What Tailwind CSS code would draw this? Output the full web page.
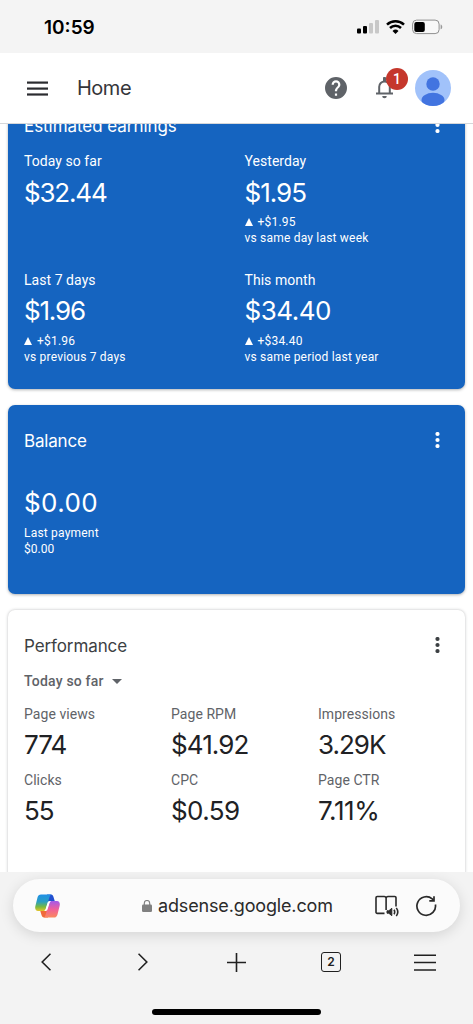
<!DOCTYPE html>
<html lang="en">
<head>
<meta charset="utf-8">
<title>Home</title>
<script src="https://cdn.jsdelivr.net/npm/@tailwindcss/browser@4"></script>
</head>
<body class="w-[473px] h-[1024px] overflow-hidden flex flex-col bg-white font-['Roboto',sans-serif]">

<!-- Status bar -->
<div class="h-[53px] shrink-0 bg-[#f4f4f4] flex items-center justify-between pl-[44px] pr-[30px]">
  <span class="font-['Inter',sans-serif] font-semibold text-[19px] leading-6 tracking-[0px] text-black mt-[2px]">10:59</span>
  <div class="flex items-center mt-px">
    <svg class="w-[22px] h-[14px]" viewBox="0 0 22 14"><rect y="8.5" width="4" height="5" rx="1"/><rect x="6" y="6" width="4" height="7.500" rx="1"/><rect x="12" y="3" width="4" height="10.500" rx="1" fill="#c8c8c8"/><rect x="18" y="0" width="4" height="13.500" rx="1" fill="#c8c8c8"/></svg>
    <svg class="w-[19px] h-[14px] ml-[7px]" viewBox="0 0 19 14" fill="none" stroke="#000" stroke-width="2.500"><path d="M1 4.700a12.300 12.300 0 0 1 17 0"/><path d="M4 8a8 8 0 0 1 11 0"/><path d="M9.500 14L6.500 11a4.300 4.300 0 0 1 6 0z" fill="#000" stroke="none"/></svg>
    <svg class="w-[31px] h-[16px] ml-[7px]" viewBox="0 0 31 16"><rect x=".6" y="1.100" width="26.500" height="13.500" rx="4" fill="#f8f8f8" stroke="#8f8f8f"/><rect x="2.300" y="2.900" width="10.500" height="10" rx="2" fill="#000"/><path d="M28.600 5.500c2.200.6 2.200 4.200 0 4.800z" fill="#999"/></svg>
  </div>
</div>

<!-- App header -->
<header class="h-[71px] shrink-0 bg-white border-b border-[#d5d7da] flex items-center">
  <svg class="w-[21px] h-[15px] ml-[27px]" viewBox="0 0 21 15" fill="#2b2c30"><rect y=".5" width="21" height="2.200"/><rect y="6.500" width="21" height="2.200"/><rect y="12.400" width="21" height="2.200"/></svg>
  <h1 class="ml-[29px] font-['Inter',sans-serif] text-[20px] leading-6 tracking-[-0.5px] text-[#35363a]">Home</h1>
  <div class="ml-auto flex items-center mr-[22px]">
    <svg class="w-[22px] h-[22px]" viewBox="2 2 20 20" fill="#5f6368"><path d="M12 2a10 10 0 1 0 0 20 10 10 0 0 0 0-20zm1 17h-2v-2h2zm2.070-7.750-.9.920C13.450 12.900 13 13.500 13 15h-2v-.5c0-1.100.450-2.100 1.170-2.830l1.240-1.260c.370-.360.590-.860.590-1.410a2 2 0 1 0-4 0H8a4 4 0 1 1 8 0c0 .880-.360 1.680-.930 2.250z"/></svg>
    <div class="relative w-[19px] h-[22px] ml-[28px]">
      <svg class="w-[19px] h-[22px]" viewBox="0 0 19 22"><path d="M4.200 16.500V9.800a5.300 5.300 0 0 1 10.600 0v6.700" fill="none" stroke="#5f6368" stroke-width="2"/><path d="M1 15.600h17v2H1zM8 1.200a1.500 1.500 0 0 1 3 0v3H8zM7.200 19h4.600a2.300 2.300 0 0 1-4.600 0z" fill="#5f6368"/></svg>
      <span class="absolute left-[11px] -top-[9px] size-[22px] rounded-full bg-[#c5372c] text-white font-medium text-[14px] leading-[22px] text-center">1</span>
    </div>
    <svg class="size-[36px] ml-[21px]" viewBox="0 0 36 36"><defs><clipPath id="av"><circle cx="18" cy="18" r="18"/></clipPath></defs><g clip-path="url(#av)"><rect width="36" height="36" fill="#a1c2fa"/><circle cx="18" cy="14" r="6.700" fill="#4274e0"/><ellipse cx="18" cy="30" rx="11.500" ry="7.200" fill="#4274e0"/></g></svg>
  </div>
</header>

<!-- Cards -->
<main class="flex-1 min-h-0 overflow-hidden px-2 flex flex-col gap-4">
  <section class="-mt-[34px] h-[299px] shrink-0 rounded-[7px] bg-[#1564c0] shadow-[0_1px_3px_rgba(60,64,67,0.4)] px-4 pt-[19px] text-white">
    <div class="flex items-center justify-between h-8">
      <h2 class="font-['Inter',sans-serif] text-[17px] tracking-[-0.05px] pt-[3px]">Estimated earnings</h2>
      <svg class="w-[5px] h-[16px] mr-[9px]" viewBox="0 0 5 16" fill="currentColor"><circle cx="2.500" cy="2" r="2.100"/><circle cx="2.500" cy="8" r="2.100"/><circle cx="2.500" cy="14" r="2.100"/></svg>
    </div>
    <div class="grid grid-cols-[220.500px_1fr] gap-y-[23.500px] mt-[10px]">
      <div class="h-[95px]">
        <div class="text-[14px] leading-5 tracking-[0.05px]">Today so far</div>
        <div class="font-['Inter',sans-serif] text-[26px] leading-[42px] pt-px -mb-px tracking-[-1.200px]">$32.44</div>
      </div>
      <div class="h-[95px]">
        <div class="text-[14px] leading-5 tracking-[0.05px]">Yesterday</div>
        <div class="font-['Inter',sans-serif] text-[26px] leading-[42px] pt-px -mb-px tracking-[-1px]">$1.95</div>
        <div class="flex items-center text-[12px] leading-4 tracking-[0.2px] mt-px"><svg class="size-[8px] mr-[5px]" viewBox="0 0 8 8" fill="currentColor"><path d="M4 0l4 8H0z"/></svg>+$1.95</div>
        <div class="text-[12px] leading-4 tracking-[0.2px]">vs same day last week</div>
      </div>
      <div class="h-[95px]">
        <div class="text-[14px] leading-5 tracking-[0.05px]">Last 7 days</div>
        <div class="font-['Inter',sans-serif] text-[26px] leading-[42px] tracking-[-1.200px]">$1.96</div>
        <div class="flex items-center text-[12px] leading-4 tracking-[0.2px] mt-px"><svg class="size-[8px] mr-[5px]" viewBox="0 0 8 8" fill="currentColor"><path d="M4 0l4 8H0z"/></svg>+$1.96</div>
        <div class="text-[12px] leading-4 tracking-[0.2px]">vs previous 7 days</div>
      </div>
      <div class="h-[95px]">
        <div class="text-[14px] leading-5 tracking-[0.05px]">This month</div>
        <div class="font-['Inter',sans-serif] text-[26px] leading-[42px] tracking-[-0.5px]">$34.40</div>
        <div class="flex items-center text-[12px] leading-4 tracking-[0.2px] mt-px"><svg class="size-[8px] mr-[5px]" viewBox="0 0 8 8" fill="currentColor"><path d="M4 0l4 8H0z"/></svg>+$34.40</div>
        <div class="text-[12px] leading-4 tracking-[0.2px]">vs same period last year</div>
      </div>
    </div>
  </section>

  <section class="h-[189px] shrink-0 rounded-[7px] bg-[#1564c0] shadow-[0_1px_3px_rgba(60,64,67,0.4)] px-4 pt-[19px] text-white">
    <div class="flex items-center justify-between h-8">
      <h2 class="font-['Inter',sans-serif] text-[17px] tracking-[-0.2px] pt-[3px]">Balance</h2>
      <svg class="w-[5px] h-[16px] mr-[9px]" viewBox="0 0 5 16" fill="currentColor"><circle cx="2.500" cy="2" r="2.100"/><circle cx="2.500" cy="8" r="2.100"/><circle cx="2.500" cy="14" r="2.100"/></svg>
    </div>
    <div class="mt-[26px] font-['Inter',sans-serif] text-[26px] leading-[42px] tracking-[0.4px]">$0.00</div>
    <div class="text-[12px] leading-4 tracking-[0.2px] mt-px">Last payment</div>
    <div class="text-[12px] leading-4">$0.00</div>
  </section>

  <section class="h-[299px] shrink-0 rounded-[7px] bg-white shadow-[0_0_3px_rgba(60,64,67,0.35)] px-4 pt-[19px]">
    <div class="flex items-center justify-between h-8 text-[#3c4043]">
      <h2 class="font-['Inter',sans-serif] text-[17px] tracking-[-0.1px] pt-[3px]">Performance</h2>
      <svg class="w-[5px] h-[16px] mr-[9px]" viewBox="0 0 5 16" fill="currentColor"><circle cx="2.500" cy="2" r="2.100"/><circle cx="2.500" cy="8" r="2.100"/><circle cx="2.500" cy="14" r="2.100"/></svg>
    </div>
    <div class="flex items-center gap-[8px] mt-[10px] text-[14px] leading-5 font-medium tracking-[0.2px] text-[#5f6368]">Today so far<svg class="w-[10px] h-[5px]" viewBox="0 0 10 5" fill="currentColor"><path d="M0 0h10L5 5z"/></svg></div>
    <div class="grid grid-cols-[147px_147px_1fr] mt-[13px] gap-y-[4px] text-[#5f6368] text-[14px] leading-5 tracking-[0.05px]">
      <div>Page views<div class="font-['Inter',sans-serif] text-[26px] leading-[42px] tracking-[-1px] text-[#202124]">774</div></div>
      <div>Page RPM<div class="font-['Inter',sans-serif] text-[26px] leading-[42px] tracking-[-0.9px] text-[#202124]">$41.92</div></div>
      <div>Impressions<div class="font-['Inter',sans-serif] text-[26px] leading-[42px] tracking-[-1px] text-[#202124]">3.29K</div></div>
      <div>Clicks<div class="font-['Inter',sans-serif] text-[26px] leading-[42px] tracking-[-1px] text-[#202124]">55</div></div>
      <div>CPC<div class="font-['Inter',sans-serif] text-[26px] leading-[42px] tracking-[-0.6px] text-[#202124]">$0.59</div></div>
      <div>Page CTR<div class="font-['Inter',sans-serif] text-[26px] leading-[42px] tracking-[-0.4px] text-[#202124]">7.11%</div></div>
    </div>
  </section>
</main>

<!-- Browser toolbar -->
<footer class="h-[152px] shrink-0 bg-[#f3f3f3] flex flex-col pt-[7px]">
  <div class="mx-[13px] h-[53px] rounded-[27px] bg-[#fbfbfb] shadow-[0_3px_14px_rgba(0,0,0,0.13)] flex items-center text-[#2a2a2a]">
    <svg class="w-[25px] h-[24px] ml-[22px]" viewBox="0 0 25 24">
      <defs>
        <linearGradient id="c1" x1="0" y1="0" x2="0" y2="1"><stop offset="0" stop-color="#1f8fe8"/><stop offset=".45" stop-color="#2a9fc0"/><stop offset=".75" stop-color="#79b93f"/><stop offset="1" stop-color="#e5c52a"/></linearGradient>
        <linearGradient id="c2" x1="0" y1="0" x2="0" y2="1"><stop offset="0" stop-color="#a35bea"/><stop offset=".5" stop-color="#f0609a"/><stop offset="1" stop-color="#fb8a5c"/></linearGradient>
      </defs>
      <path d="M12 .4h4c1.500 0 2 1 2.500 2.500l1.300 4.300h-4.200c-2 0-3 1-3.600 3z" fill="#2250d0"/>
      <path d="M13 23.600H9c-1.500 0-2-1-2.500-2.500l-1.300-4.300h4.200c2 0 3-1 3.600-3z" fill="#f06a3a"/>
      <path d="M6 .4h11c-1.300 0-2 1-2.400 2.400L10.800 15c-.4 1.400-1.300 2-3 2H3C.6 17-.3 14.800.4 12L2.500 3.500C3 1.400 4.200.4 6 .4z" fill="url(#c1)"/>
      <path d="M19 23.600H8c1.300 0 2-1 2.400-2.400L14.200 9c.4-1.400 1.300-2 3-2H22c2.400 0 3.300 2.200 2.600 5l-2.100 8.500c-.5 2.100-1.700 3.100-3.500 3.100z" fill="url(#c2)"/>
      <path d="M12.700 8.200C13.300 7 14.500 7 16 7c-.9.700-1.300 1.500-1.700 2.800l-1.900 6C12 17 10.800 17 9.200 17c.9-.7 1.400-1.600 1.800-3z" fill="#fff"/>
    </svg>
    <svg class="w-[10px] h-[12px] ml-[82px]" viewBox="0 0 10 12"><rect y="4.500" width="10" height="7.500" rx="1.300" fill="#808080"/><path d="M2.300 5V3.200a2.700 2.700 0 0 1 5.400 0V5" fill="none" stroke="#808080" stroke-width="1.200"/></svg>
    <span class="ml-[6px] font-['Inter',sans-serif] text-[18px] leading-6 tracking-[-0.15px] whitespace-nowrap">adsense.google.com</span>
    <div class="ml-auto flex items-center mr-[23px]">
      <svg class="w-[24px] h-[22px]" viewBox="0 0 24 22" fill="none" stroke="#2a2a2a" stroke-width="1.600" stroke-linejoin="round"><path d="M9.500 18.400H2.200A1.200 1.200 0 0 1 1 17.200V2.700a1.200 1.200 0 0 1 1.200-1.200h6.900c1.200 0 2 .7 2 1.800V15M11.100 3.300c0-1.100.8-1.800 2-1.800h6.700A1.200 1.200 0 0 1 21 2.700v8.800"/><path d="M12 15.800h1.800l3-2.500v7.400l-3-2.500H12z" fill="#2a2a2a" stroke-width="1"/><path d="M19 14.800q1.400 2.200 0 4.400M21.300 12.900q3 4.100 0 8.200"/></svg>
      <svg class="w-[22px] h-[22px] ml-[16px]" viewBox="0 0 22 22" fill="none" stroke="#2a2a2a" stroke-width="1.700"><path d="M20.400 9.500a9.300 9.300 0 1 1-3.200-5.600l1.500 1.500"/><path d="M19 1.300v4.500h-4.700"/></svg>
    </div>
  </div>
  <div class="mt-[19px] flex items-center h-[22px]">
    <svg class="w-[10px] h-[18px] ml-[41px]" viewBox="0 0 10 18" fill="none" stroke="#202020" stroke-width="1.600"><path d="M9.500.7L1.200 9l8.300 8.300"/></svg>
    <svg class="w-[10px] h-[18px] ml-[87px]" viewBox="0 0 10 18" fill="none" stroke="#202020" stroke-width="1.600"><path d="M.5.7L8.800 9 .5 17.300"/></svg>
    <svg class="w-[19px] h-[19px] ml-[79px]" viewBox="0 0 19 19" fill="none" stroke="#202020" stroke-width="1.600"><path d="M9.500 0v19M0 9.500h19"/></svg>
    <div class="ml-[75px] w-[20px] h-[20px] rounded-[3px] border-[1.500px] border-[#202020] flex items-center justify-center font-['Inter',sans-serif] font-semibold text-[12px] leading-none text-[#202020]">2</div>
    <svg class="w-[22px] h-[17px] ml-[73px]" viewBox="0 0 22 17" stroke="#202020" stroke-width="1.500"><path d="M0 1.300h22M0 8.600h22M0 15.900h22"/></svg>
  </div>
  <div class="mx-auto mt-[36px] w-[169px] h-[6px] rounded-full bg-black shrink-0"></div>
</footer>
</body>
</html>
